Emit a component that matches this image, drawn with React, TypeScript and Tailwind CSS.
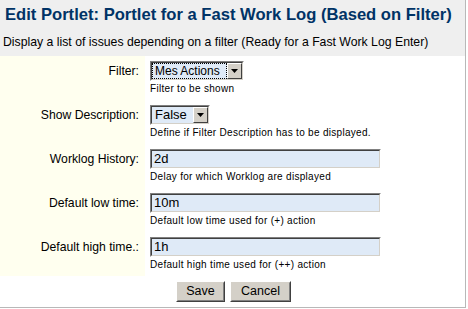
const sans = 'font-["Liberation_Sans",Arial,sans-serif]'

function Inset({ className, children }: { className: string; children: React.ReactNode }) {
  return (
    <div className={`flex h-[20px] border border-t-[#808080] border-l-[#808080] border-b-white border-r-white ${className}`}>
      <div className="flex flex-1 border border-t-[#404040] border-l-[#404040] border-b-[#d4d0c8] border-r-[#d4d0c8] bg-[#dfeaf7]">
        {children}
      </div>
    </div>
  )
}

function Select({ value, width, size, focused }: { value: string; width: string; size: string; focused?: boolean }) {
  return (
    <Inset className={width}>
      <div className="flex flex-1 items-center px-[1px]">
        <span
          className={`flex-1 h-[14px] leading-[14px] ${size} pl-[2px] text-black whitespace-nowrap overflow-hidden ${
            focused ? 'outline outline-1 outline-dotted outline-black' : ''
          }`}
        >
          {value}
        </span>
      </div>
      <div className="w-[15px] flex items-center justify-center bg-[#d4d0c8] border border-t-white border-l-white border-b-[#404040] border-r-[#404040]">
        <svg width="7" height="4" viewBox="0 0 7 4">
          <path d="M0 0h7L3.5 4z" fill="#000" />
        </svg>
      </div>
    </Inset>
  )
}

function TextInput({ value }: { value: string }) {
  return (
    <Inset className="w-[231px]">
      <span className="pl-[2px] text-[13px] leading-[16px] text-black">{value}</span>
    </Inset>
  )
}

function Row({ label, help, children }: { label: string; help: string; children: React.ReactNode }) {
  return (
    <div className="flex h-[44px]">
      <div className="w-[145px] shrink-0 bg-[#ffffef] pt-[5px] pr-[6px] text-right text-[12.2px] leading-[20px] text-black">
        {label}
      </div>
      <div className="flex-1 pl-[5px] pt-[5px]">
        {children}
        <div className="mt-[2px] text-[10px] leading-[12px] tracking-[0.3px] text-black">{help}</div>
      </div>
    </div>
  )
}

function Button({ children, width }: { children: React.ReactNode; width: string }) {
  return (
    <div className={`h-[21px] ${width} border border-t-white border-l-white border-b-[#404040] border-r-[#404040] bg-[#d4d0c8]`}>
      <div className="flex h-full items-center justify-center border border-transparent border-b-[#808080] border-r-[#808080] text-[12.5px] text-black">
        {children}
      </div>
    </div>
  )
}

export default function App() {
  return (
    <div className={`w-[468px] h-[309px] bg-white ${sans}`}>
      <div className="w-[466px] h-[308px] border-r border-b border-[#b8b8b8] flex flex-col">
        <div className="h-[56px] bg-[#efefef] pl-[5px] pt-[5px]">
          <h1 className="text-[16.6px] leading-[20px] font-bold text-[#003366]">
            Edit Portlet: Portlet for a Fast Work Log (Based on Filter)
          </h1>
          <p className="mt-[10px] -ml-[2px] text-[12.25px] leading-[15px] text-black">
            Display a list of issues depending on a filter (Ready for a Fast Work Log Enter)
          </p>
        </div>

        <Row label="Filter:" help="Filter to be shown">
          <Select value="Mes Actions" width="w-[94px]" size="text-[12px]" focused />
        </Row>
        <Row label="Show Description:" help="Define if Filter Description has to be displayed.">
          <Select value="False" width="w-[60px]" size="text-[13px]" />
        </Row>
        <Row label="Worklog History:" help="Delay for which Worklog are displayed">
          <TextInput value="2d" />
        </Row>
        <Row label="Default low time:" help="Default low time used for (+) action">
          <TextInput value="10m" />
        </Row>
        <Row label="Default high time.:" help="Default high time used for (++) action">
          <TextInput value="1h" />
        </Row>

        <div className="flex flex-1 justify-center gap-[5px] pt-[5px] pl-[2px]">
          <Button width="w-[49px]">Save</Button>
          <Button width="w-[61px]">Cancel</Button>
        </div>
      </div>
    </div>
  )
}
